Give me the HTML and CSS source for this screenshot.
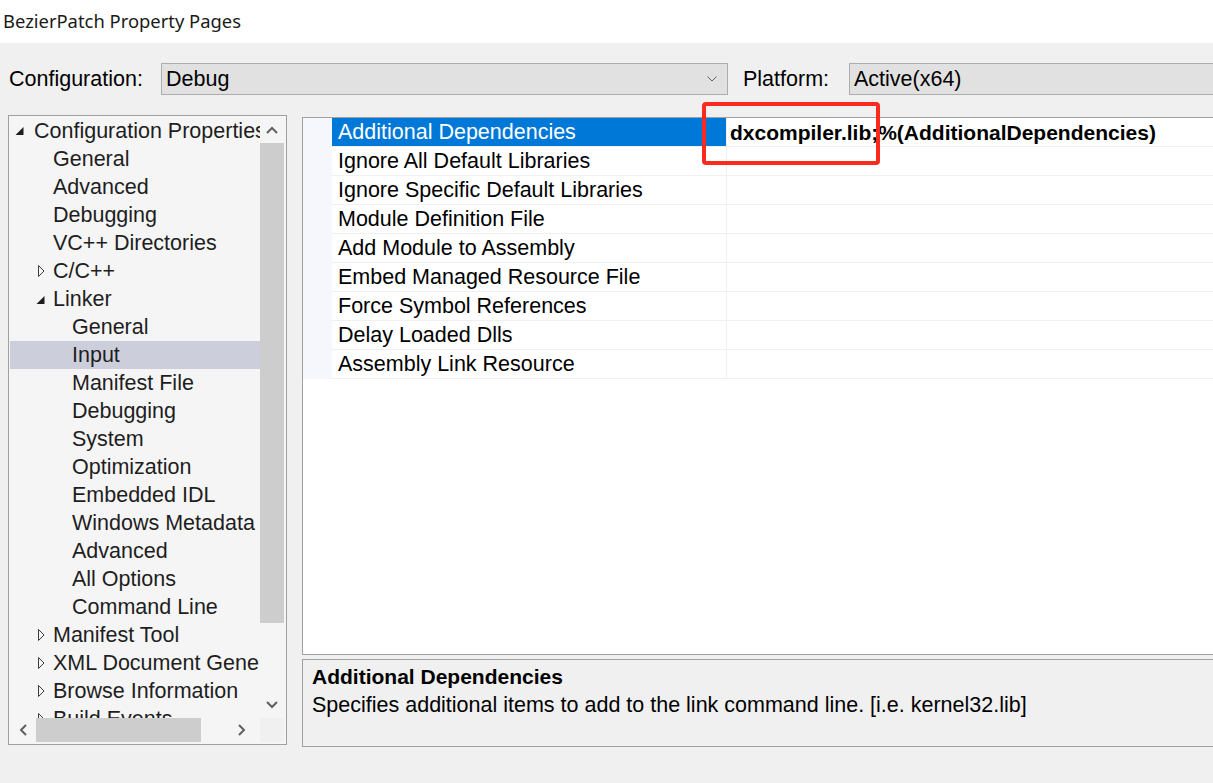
FILE: index.html
```html
<!DOCTYPE html>
<html>
<head>
<meta charset="utf-8">
<title>BezierPatch Property Pages</title>
<link rel="stylesheet" href="styles.css">
</head>
<body>
<div class="window">
  <div class="titlebar">BezierPatch Property Pages</div>

  <div class="config-row">
    <span class="lbl lbl-config">Configuration:</span>
    <div class="combo combo-config">
      <span class="combo-text">Debug</span>
      <svg class="combo-chev" width="10" height="6" viewBox="0 0 10 6"><polyline points="0.5,0.5 5,5 9.5,0.5" fill="none" stroke="#606060" stroke-width="1"/></svg>
    </div>
    <span class="lbl lbl-platform">Platform:</span>
    <div class="combo combo-platform">
      <span class="combo-text">Active(x64)</span>
    </div>
  </div>

  <div class="main">
    <div class="tree">
      <div class="tree-content">
        <div class="item l0"><span class="exp"><svg width="19" height="28" viewBox="0 0 19 28"><polygon points="8.5,10 8.5,18 0.5,18" fill="#1e1e1e"/></svg></span><span>Configuration Properties</span></div>
        <div class="item l1"><span class="exp"></span><span>General</span></div>
        <div class="item l1"><span class="exp"></span><span>Advanced</span></div>
        <div class="item l1"><span class="exp"></span><span>Debugging</span></div>
        <div class="item l1"><span class="exp"></span><span>VC++ Directories</span></div>
        <div class="item l1"><span class="exp"><svg width="19" height="28" viewBox="0 0 19 28"><polygon points="4.5,8.5 10,14 4.5,19.5" fill="none" stroke="#3c3c3c" stroke-width="1"/></svg></span><span>C/C++</span></div>
        <div class="item l1"><span class="exp"><svg width="19" height="28" viewBox="0 0 19 28"><polygon points="10.5,11 10.5,19 2.5,19" fill="#1e1e1e"/></svg></span><span>Linker</span></div>
        <div class="item l2"><span class="exp"></span><span>General</span></div>
        <div class="item l2 selected"><span class="exp"></span><span>Input</span></div>
        <div class="item l2"><span class="exp"></span><span>Manifest File</span></div>
        <div class="item l2"><span class="exp"></span><span>Debugging</span></div>
        <div class="item l2"><span class="exp"></span><span>System</span></div>
        <div class="item l2"><span class="exp"></span><span>Optimization</span></div>
        <div class="item l2"><span class="exp"></span><span>Embedded IDL</span></div>
        <div class="item l2"><span class="exp"></span><span>Windows Metadata</span></div>
        <div class="item l2"><span class="exp"></span><span>Advanced</span></div>
        <div class="item l2"><span class="exp"></span><span>All Options</span></div>
        <div class="item l2"><span class="exp"></span><span>Command Line</span></div>
        <div class="item l1"><span class="exp"><svg width="19" height="28" viewBox="0 0 19 28"><polygon points="4.5,8.5 10,14 4.5,19.5" fill="none" stroke="#3c3c3c" stroke-width="1"/></svg></span><span>Manifest Tool</span></div>
        <div class="item l1"><span class="exp"><svg width="19" height="28" viewBox="0 0 19 28"><polygon points="4.5,8.5 10,14 4.5,19.5" fill="none" stroke="#3c3c3c" stroke-width="1"/></svg></span><span>XML Document Generator</span></div>
        <div class="item l1"><span class="exp"><svg width="19" height="28" viewBox="0 0 19 28"><polygon points="4.5,8.5 10,14 4.5,19.5" fill="none" stroke="#3c3c3c" stroke-width="1"/></svg></span><span>Browse Information</span></div>
        <div class="item l1"><span class="exp"><svg width="19" height="28" viewBox="0 0 19 28"><polygon points="4.5,8.5 10,14 4.5,19.5" fill="none" stroke="#3c3c3c" stroke-width="1"/></svg></span><span>Build Events</span></div>
      </div>
      <div class="vscroll">
        <div class="sbtn"><svg width="12" height="8" viewBox="0 0 12 8"><polyline points="1,7 6,2 11,7" fill="none" stroke="#606060" stroke-width="2"/></svg></div>
        <div class="vthumb"></div>
        <div class="sfill"></div>
        <div class="sbtn"><svg width="12" height="8" viewBox="0 0 12 8"><polyline points="1,1 6,6 11,1" fill="none" stroke="#606060" stroke-width="2"/></svg></div>
      </div>
      <div class="hscroll">
        <div class="sbtn"><svg width="8" height="12" viewBox="0 0 8 12"><polyline points="7,1 2,6 7,11" fill="none" stroke="#606060" stroke-width="2"/></svg></div>
        <div class="hthumb"></div>
        <div class="sfill"></div>
        <div class="sbtn"><svg width="8" height="12" viewBox="0 0 8 12"><polyline points="1,1 6,6 1,11" fill="none" stroke="#606060" stroke-width="2"/></svg></div>
      </div>
      <div class="corner"></div>
    </div>

    <div class="right">
      <div class="grid">
        <div class="prow sel"><div class="margin"></div><div class="pname">Additional Dependencies</div><div class="pval">dxcompiler.lib;%(AdditionalDependencies)</div></div>
        <div class="prow"><div class="margin"></div><div class="pname">Ignore All Default Libraries</div><div class="pval"></div></div>
        <div class="prow"><div class="margin"></div><div class="pname">Ignore Specific Default Libraries</div><div class="pval"></div></div>
        <div class="prow"><div class="margin"></div><div class="pname">Module Definition File</div><div class="pval"></div></div>
        <div class="prow"><div class="margin"></div><div class="pname">Add Module to Assembly</div><div class="pval"></div></div>
        <div class="prow"><div class="margin"></div><div class="pname">Embed Managed Resource File</div><div class="pval"></div></div>
        <div class="prow"><div class="margin"></div><div class="pname">Force Symbol References</div><div class="pval"></div></div>
        <div class="prow"><div class="margin"></div><div class="pname">Delay Loaded Dlls</div><div class="pval"></div></div>
        <div class="prow"><div class="margin"></div><div class="pname">Assembly Link Resource</div><div class="pval"></div></div>
      </div>
      <div class="desc">
        <div class="desc-title">Additional Dependencies</div>
        <div class="desc-text">Specifies additional items to add to the link command line. [i.e. kernel32.lib]</div>
      </div>
    </div>
  </div>

  <div class="annotation"></div>
</div>
</body>
</html>
```

FILE: styles.css
```css
html, body {
  margin: 0;
  padding: 0;
}
body {
  width: 1213px;
  height: 783px;
  overflow: hidden;
  background: #f0f0f0;
  font-family: "Liberation Sans", Arial, sans-serif;
  color: #000;
}
.window {
  position: relative;
  width: 1213px;
  height: 783px;
}
.titlebar {
  height: 43px;
  background: #ffffff;
  font-family: "Noto Sans", "Open Sans", sans-serif;
  font-size: 18.4px;
  line-height: 41px;
  padding-left: 3px;
  color: #1a1a1a;
  white-space: nowrap;
}
.config-row {
  display: flex;
  align-items: center;
  margin-top: 20px;
  height: 32px;
  font-size: 21.5px;
  white-space: nowrap;
}
.lbl {
  flex: none;
  line-height: 33px;
}
.lbl-config {
  margin-left: 9px;
  width: 152px;
}
.lbl-platform {
  margin-left: 15px;
  width: 106px;
}
.combo {
  flex: none;
  box-sizing: border-box;
  height: 32px;
  background: #e1e1e1;
  border: 1px solid #adadad;
  display: flex;
  align-items: center;
  padding-left: 4px;
}
.combo-config {
  width: 567px;
  justify-content: space-between;
  padding-right: 10px;
}
.combo-platform {
  width: 420px;
}
.combo-text {
  line-height: 31px;
}
.combo-chev {
  display: block;
}
.main {
  display: flex;
  margin-top: 20px;
  padding-left: 8px;
}
.tree {
  flex: none;
  box-sizing: border-box;
  width: 279px;
  height: 630px;
  border: 1px solid #a0a0a0;
  padding: 1px 2px 2px 1px;
  background: #f5f5f5;
  display: grid;
  grid-template-columns: 250px 24px;
  grid-template-rows: 601px 24px;
}
.tree-content {
  overflow: hidden;
  font-size: 21.5px;
  color: #1e1e1e;
  white-space: nowrap;
}
.item {
  display: flex;
  align-items: center;
  height: 28px;
  line-height: 28px;
}
.item.l0 { padding-left: 5px; }
.item.l1 { padding-left: 24px; }
.item.l2 { padding-left: 43px; }
.item.selected {
  background: #cccedb;
}
.exp {
  flex: none;
  width: 19px;
  height: 28px;
}
.exp svg {
  display: block;
}
.vscroll {
  display: flex;
  flex-direction: column;
  background: #f5f5f5;
}
.vscroll .sbtn {
  height: 26px;
  display: flex;
  align-items: center;
  justify-content: center;
  flex: none;
}
.vthumb {
  height: 480px;
  background: #cdcdcd;
  flex: none;
}
.sfill {
  flex: 1;
}
.hscroll {
  display: flex;
  background: #f5f5f5;
}
.hscroll .sbtn {
  width: 26px;
  display: flex;
  align-items: center;
  justify-content: center;
  flex: none;
}
.hscroll .sbtn:last-child {
  width: 30px;
  justify-content: flex-start;
  padding-left: 8px;
  box-sizing: border-box;
}
.hthumb {
  width: 165px;
  background: #cdcdcd;
  flex: none;
}
.corner {
  background: #f0f0f0;
}
.sbtn svg {
  display: block;
}
.right {
  flex: none;
  width: 980px;
  margin-left: 15px;
  padding-top: 2px;
  display: flex;
  flex-direction: column;
}
.grid {
  box-sizing: border-box;
  height: 538px;
  border: 1px solid #a0a0a0;
  background: #ffffff;
  font-size: 21.5px;
  white-space: nowrap;
}
.prow {
  display: flex;
  height: 29px;
}
.margin {
  flex: none;
  width: 29px;
  background: #f5f7fc;
}
.pname {
  flex: none;
  box-sizing: border-box;
  width: 395px;
  padding-left: 6px;
  line-height: 29px;
  border-bottom: 1px solid #f0f0f0;
  border-right: 1px solid #f0f0f0;
}
.pval {
  flex: 1;
  padding-left: 3px;
  line-height: 29px;
  border-bottom: 1px solid #f0f0f0;
  font-weight: bold;
  font-size: 21px;
}
.prow.sel .pname {
  background: #0078d7;
  color: #ffffff;
}
.desc {
  margin-top: 4px;
  box-sizing: border-box;
  height: 88px;
  border: 1px solid #a0a0a0;
  background: #f0f0f0;
  padding: 3px 0 0 9px;
  white-space: nowrap;
}
.desc-title {
  font-weight: bold;
  font-size: 21px;
  line-height: 28px;
}
.desc-text {
  font-size: 21.5px;
  line-height: 28px;
}
.annotation {
  position: absolute;
  left: 702px;
  top: 102px;
  width: 178px;
  height: 63px;
  box-sizing: border-box;
  border: 4px solid #fa2a1e;
  border-radius: 4px;
}
```
